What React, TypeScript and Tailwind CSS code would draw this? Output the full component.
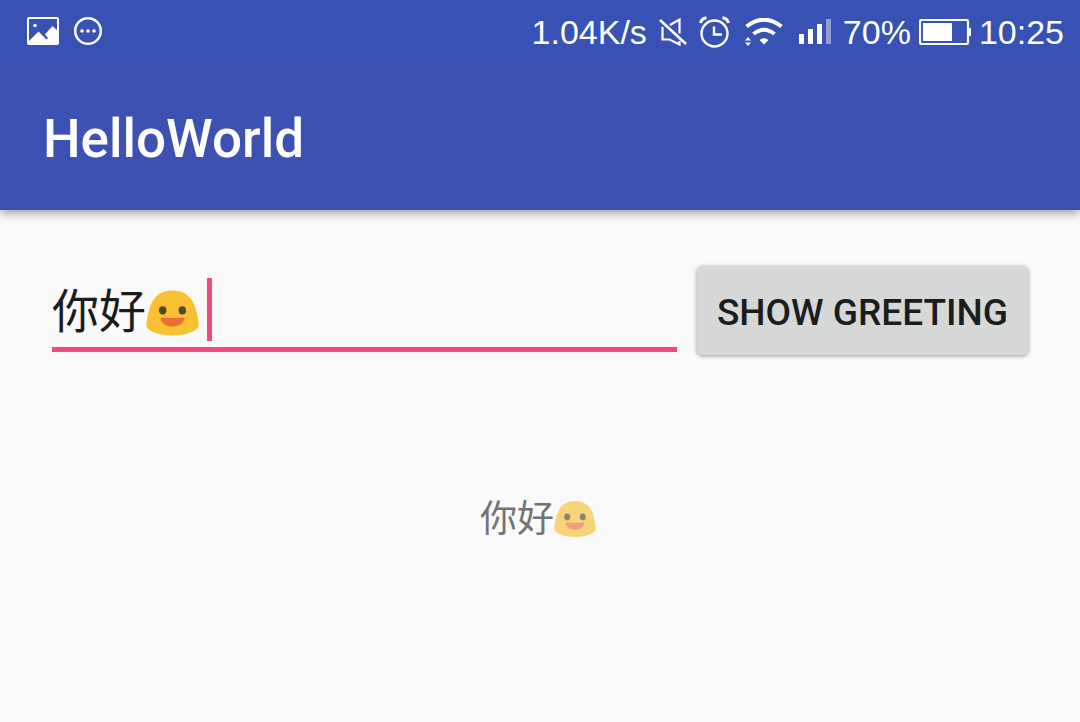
import { useState } from "react";

function Smiley({ className }: { className: string }) {
  return (
    <svg viewBox="0 0 54 46" className={className} role="img" aria-label="smiling face">
      <path
        d="M27 0C17 0 9.500 4.500 5.500 13C3 18.500 1.300 26 0.500 33C0.200 36.800 0.800 38.800 4 40.700C10 44.400 18 46 27 46S44 44.400 50 40.700C53.200 38.800 53.800 36.800 53.500 33C52.700 26 51 18.500 48.500 13C44.500 4.500 37 0 27 0Z"
        fill="#f9c031"
      />
      <ellipse cx="17" cy="20.300" rx="3.800" ry="4.300" fill="#4a4a35" />
      <ellipse cx="37" cy="20.300" rx="3.800" ry="4.300" fill="#4a4a35" />
      <path
        d="M16.500 27.500Q27 28.500 37.500 27.500C39 27.300 39.300 28.500 38.800 29.800C37 34.500 33 36.700 27 36.700S17 34.500 15.200 29.800C14.700 28.500 15 27.300 16.500 27.500Z"
        fill="#ea6c38"
      />
    </svg>
  );
}

function StatusBar() {
  return (
    <div className="flex h-16 items-center justify-between bg-[#3751b4] pr-4 pl-[27px] text-[34px] leading-[40px] text-white">
      <div className="flex items-center gap-[15px] pb-[2px]">
        <svg viewBox="0 0 32 28" className="h-7 w-8" fill="none">
          <rect x="1" y="1" width="30" height="26" rx="1" stroke="white" strokeWidth="2" />
          <circle cx="8" cy="8.500" r="1.800" fill="white" />
          <path d="M2 24L11.500 14.500L17 20L19.500 22.500L21 21L17.800 17.500L25.500 9L31 14V27H2Z" fill="white" />
        </svg>
        <svg viewBox="0 0 28 28" className="size-7" fill="none">
          <circle cx="14" cy="14" r="12.800" stroke="white" strokeWidth="2.400" />
          <circle cx="8" cy="14" r="1.800" fill="white" />
          <circle cx="14" cy="14" r="1.800" fill="white" />
          <circle cx="20" cy="14" r="1.800" fill="white" />
        </svg>
      </div>
      <div className="flex items-center">
        <span>1.04K/s</span>
        <svg viewBox="0 0 28 28" className="ml-3 h-7 w-7" fill="none" stroke="white" strokeWidth="2.200">
          <path d="M1 2L27 26" strokeWidth="2.600" />
          <path d="M11 7L20.500 1.500V15.500" />
          <path d="M3.500 9V21.500H10.500L20.500 26.500V23" />
        </svg>
        <svg viewBox="0 0 32 32" className="ml-3 size-8" fill="none" stroke="white">
          <circle cx="15.500" cy="17.500" r="13" strokeWidth="2.400" />
          <path d="M15 10.500V18.500H23" strokeWidth="2.400" />
          <path d="M1.500 7Q2.500 2.500 7.500 1.800M23.500 1.800Q28.500 2.500 29.500 7" strokeWidth="3" />
        </svg>
        <svg viewBox="0 0 38 28" className="ml-[14px] h-7 w-[38px]" fill="none" stroke="white">
          <path d="M1.500 8.500Q19 -5 36.500 8.500" strokeWidth="4" />
          <path d="M8.500 16Q19 7.500 29.500 16" strokeWidth="4" />
          <path d="M14.500 22Q19 18.500 23.500 22L19 26.500Z" fill="white" stroke="none" />
          <path d="M0 22.500L3 19L6 22.500ZM0 24.500H6L3 28Z" fill="white" stroke="none" />
        </svg>
        <svg viewBox="0 0 33 26" className="ml-4 h-[26px] w-[33px]" fill="white">
          <rect x="0" y="15" width="5" height="10" />
          <rect x="9" y="10" width="5" height="15" />
          <rect x="18" y="5" width="5" height="20" />
          <rect x="27" y="0" width="5" height="25" opacity=".45" />
        </svg>
        <span className="ml-[11px]">70%</span>
        <svg viewBox="0 0 52 26" className="ml-2 h-[26px] w-[52px]" fill="none">
          <rect x="1" y="1" width="48" height="24" rx="1.500" stroke="white" strokeWidth="2.200" />
          <rect x="4" y="4" width="29" height="18" fill="white" />
          <rect x="49" y="9" width="3" height="8" fill="white" />
        </svg>
        <time className="ml-2">10:25</time>
      </div>
    </div>
  );
}

export default function App() {
  const [name, setName] = useState("你好");
  const [greeting, setGreeting] = useState("你好");

  return (
    <div className="min-h-screen bg-[#fafafa] font-['Liberation_Sans','Noto_Sans_CJK_SC',sans-serif]">
      <header className="bg-[#3d51b3] shadow-[0_2px_10px_rgba(0,0,0,0.45)]">
        <StatusBar />
        <div className="flex h-[146px] items-center px-[43px] pt-1">
          <h1 className="font-['Roboto',sans-serif] text-[53px] leading-[64px] font-medium text-white">HelloWorld</h1>
        </div>
      </header>

      <main className="px-[52px] pt-14">
        <form
          className="flex items-start gap-5"
          onSubmit={(event) => {
            event.preventDefault();
            setGreeting(name);
          }}
        >
          <label className="mt-3 flex h-[74px] min-w-0 flex-1 items-start border-b-5 border-[#f34784]">
            <input
              aria-label="Greeting"
              value={name}
              onChange={(event) => setName(event.target.value)}
              className="h-[60px] w-[94px] bg-transparent font-['Noto_Sans_CJK_SC',sans-serif] text-[47px] leading-[60px] text-[#1c1c1c] outline-none"
            />
            <Smiley className="mt-3 h-[46px] w-[53px]" />
            <span className="ml-2 h-[63px] w-[5px] bg-[#f34784]" />
          </label>
          <button
            type="submit"
            className="h-[89px] rounded-[5px] bg-[#d6d8d7] px-5 pt-1 font-['Roboto',sans-serif] text-[37px] leading-[44px] font-medium whitespace-nowrap text-[#1b1c1c] shadow-[0_1px_4px_rgba(0,0,0,0.4)]"
          >
            SHOW GREETING
          </button>
        </form>

        <output className="mt-[134px] flex items-start justify-center pr-1 font-['Noto_Sans_CJK_SC',sans-serif] text-[37px] leading-[54px] text-[#737373]">
          {greeting}
          <Smiley className="mt-3 h-9 w-[42px] opacity-65" />
        </output>
      </main>
    </div>
  );
}
